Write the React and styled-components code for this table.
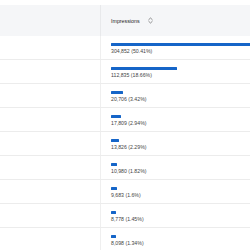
import React from 'react';
import styled, { createGlobalStyle } from 'styled-components';

const GlobalStyle = createGlobalStyle`
  html, body {
    margin: 0;
    padding: 0;
    background: #ffffff;
    overflow: hidden;
  }
  body {
    font-family: "Liberation Sans", Arial, sans-serif;
  }
`;

const BAR_MAX = 178;

const rows = [
  { value: '304,852', pct: 50.41, label: '50.41%' },
  { value: '112,835', pct: 18.66, label: '18.66%' },
  { value: '20,706', pct: 3.42, label: '3.42%' },
  { value: '17,809', pct: 2.94, label: '2.94%' },
  { value: '13,826', pct: 2.29, label: '2.29%' },
  { value: '10,980', pct: 1.82, label: '1.82%' },
  { value: '9,683', pct: 1.6, label: '1.6%' },
  { value: '8,778', pct: 1.45, label: '1.45%' },
  { value: '8,098', pct: 1.34, label: '1.34%' },
];

const Viewport = styled.div`
  width: 250px;
  height: 250px;
  overflow: hidden;
`;

const Table = styled.div`
  width: 300px;
  padding-top: 5px;
`;

const HeaderRow = styled.div`
  display: grid;
  grid-template-columns: 101px 1fr;
  height: 31px;
  background: #f5f6f8;
`;

const Row = styled.div`
  display: grid;
  grid-template-columns: 101px 1fr;
  height: 24px;
  border-bottom: 1px solid #ececec;
  box-sizing: border-box;
`;

const FirstCell = styled.div`
  border-right: 1px solid ${({ header }) => (header ? '#e8e9eb' : '#efefef')};
`;

const HeaderCell = styled.div`
  display: flex;
  align-items: center;
  gap: 8px;
  padding-left: 10px;
  font-size: 5.3px;
  color: #242424;
`;

const ValueCell = styled.div`
  display: flex;
  flex-direction: column;
  align-items: flex-start;
  padding: 7px 0 0 10px;
`;

const Bar = styled.div`
  height: 3px;
  background: #1565c8;
  border-radius: 0.5px;
`;

const ValueText = styled.div`
  margin-top: 2px;
  font-size: 5.2px;
  line-height: 6px;
  color: #444444;
  white-space: nowrap;
`;

const SortIcon = () => (
  <svg width="5" height="7" viewBox="0 0 5 7" fill="none">
    <path d="M0.8 2.6 L2.5 1 L4.2 2.6" stroke="#616161" strokeWidth="0.7" strokeLinecap="round" strokeLinejoin="round" />
    <path d="M0.8 4.4 L2.5 6 L4.2 4.4" stroke="#616161" strokeWidth="0.7" strokeLinecap="round" strokeLinejoin="round" />
  </svg>
);

export default function App() {
  const max = rows[0].pct;
  return (
    <>
      <GlobalStyle />
      <Viewport>
        <Table>
          <HeaderRow>
            <FirstCell header />
            <HeaderCell>
              Impressions
              <SortIcon />
            </HeaderCell>
          </HeaderRow>
          {rows.map((r) => (
            <Row key={r.value}>
              <FirstCell />
              <ValueCell>
                <Bar style={{ width: `${Math.max(4, (r.pct / max) * BAR_MAX)}px` }} />
                <ValueText>
                  {r.value} ({r.label})
                </ValueText>
              </ValueCell>
            </Row>
          ))}
        </Table>
      </Viewport>
    </>
  );
}
